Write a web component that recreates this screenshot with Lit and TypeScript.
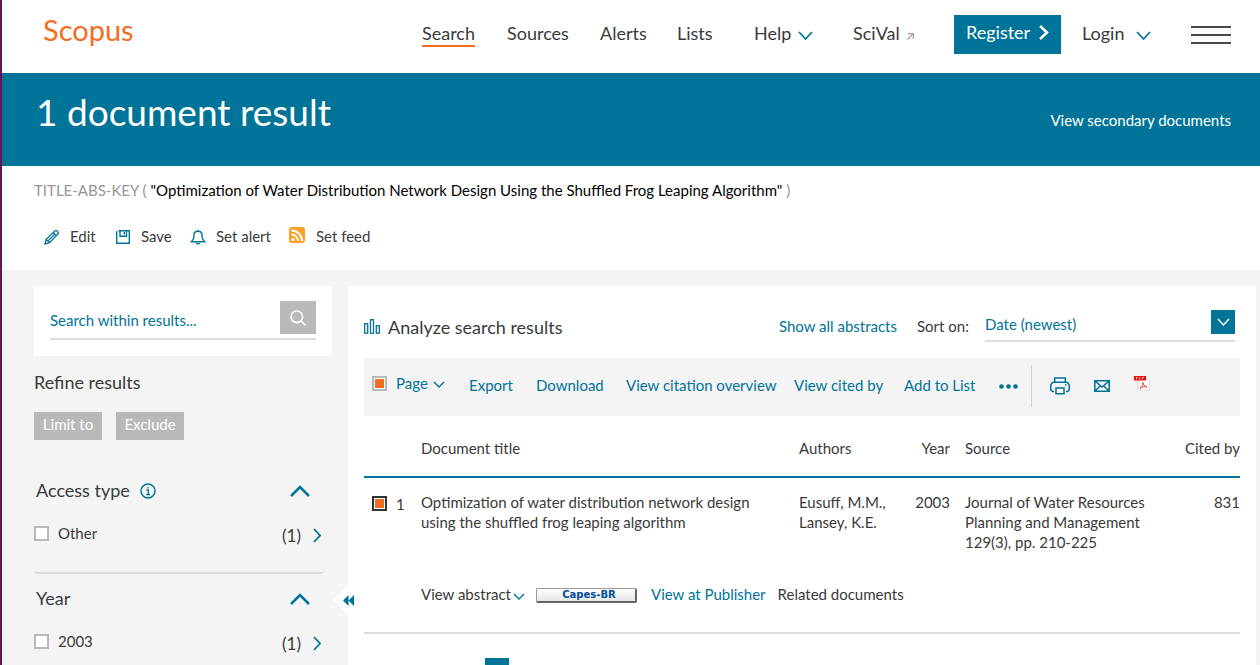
import { LitElement, html, css, svg } from "lit";
import { customElement, state } from "lit/decorators.js";

const chevron = (dir: "down" | "up" | "right", w: number, h: number, stroke = 1.7) => {
  const points = {
    down: `1,1 ${w / 2},${h - 2} ${w - 1},1`,
    up: `1,${h - 1} ${w / 2},2 ${w - 1},${h - 1}`,
    right: `1,1 ${w - 2},${h / 2} 1,${h - 1}`,
  }[dir];
  return html`<svg class="chev" width=${w} height=${h} viewBox="0 0 ${w} ${h}" aria-hidden="true">
    ${svg`<polyline points=${points} fill="none" stroke="currentColor" stroke-width=${stroke} />`}
  </svg>`;
};

const base = css`
  * { box-sizing: border-box; }
  a { color: inherit; text-decoration: none; }
  button, input, select { font: inherit; color: inherit; border: 0; border-radius: 0; margin: 0; padding: 0; background: none; }
  button { cursor: pointer; text-align: left; }
  svg { display: block; flex: none; }
  .check {
    appearance: none; width: 15px; height: 15px; flex: none;
    border: 2px solid #b9b9b9; background: #fff; display: block;
  }
  .check:checked { background: #f36d21; box-shadow: inset 0 0 0 1px #fff; }
`;

@customElement("site-header")
export class SiteHeader extends LitElement {
  static styles = [base, css`
    :host { display: block; background: #fff; color: #3a3a3a; }
    .bar { display: flex; justify-content: space-between; height: 73px; padding: 0 29px 0 41px; }
    .brand { color: #f36d21; font-size: 29px; line-height: 36px; padding-top: 12px; }
    .nav { display: grid; grid-template-columns: 85px 93px 77px 77px 99px 101px 128px 109px 40px;
      align-items: start; padding-top: 15px; font-size: 18px; line-height: 24px; }
    .item { display: inline-flex; align-items: center; justify-self: start; gap: 7px; margin-top: 6px; height: 24px; }
    .current { height: 26px; border-bottom: 2px solid #f36d21; }
    .item .chev { color: #007398; margin-top: 6px; }
    .login { gap: 12px; }
    .ext { color: #a0a0a0; margin-top: 6px; }
    .register { background: #007398; color: #fff; width: 107px; height: 39px; display: flex; align-items: center;
      gap: 9px; padding: 0 10px 5px 12px; }
    .burger { width: 40px; height: 18px; margin-top: 11px; border-top: 2px solid #4a4a4a; border-bottom: 2px solid #4a4a4a;
      display: flex; align-items: center; }
    .burger span { width: 100%; height: 2px; background: #4a4a4a; }
  `];
  render() {
    return html`<header class="bar">
      <a class="brand" href="#">Scopus</a>
      <nav class="nav">
        <a class="item current" href="#">Search</a>
        <a class="item" href="#">Sources</a>
        <a class="item" href="#">Alerts</a>
        <a class="item" href="#">Lists</a>
        <button class="item">Help ${chevron("down", 15, 10)}</button>
        <a class="item" href="#">SciVal
          <svg class="ext" width="7" height="7" viewBox="0 0 7 7"><path d="M1 .7H6.3V6M6.3.7L.5 6.5" fill="none" stroke="currentColor" stroke-width="1.2"/></svg></a>
        <a class="register" href="#">Register ${chevron("right", 10, 15, 2.5)}</a>
        <button class="item login">Login ${chevron("down", 15, 10)}</button>
        <button class="burger" aria-label="Menu"><span></span></button>
      </nav>
    </header>`;
  }
}

@customElement("query-bar")
export class QueryBar extends LitElement {
  static styles = [base, css`
    :host { display: block; background: #fff; color: #3a3a3a; }
    .banner { background: #007398; color: #fff; display: flex; justify-content: space-between; align-items: flex-start;
      height: 93px; padding: 0 29px 0 34px; }
    .title { margin: 0; font-size: 37px; font-weight: 400; line-height: 48px; padding-top: 15px; }
    .secondary { line-height: 20px; padding-top: 37px; }
    .query { margin: 0; padding: 14px 32px 0; line-height: 20px; color: #000; }
    .op { color: #969696; }
    .actions { display: grid; grid-template-columns: 71px 75px 98px auto; justify-content: start;
      padding: 25px 0 23px 42px; line-height: 22px; }
    .action { display: flex; gap: 10px; }
    .action svg { color: #007398; width: 16px; height: 20px; padding-top: 4px; }
    .action .feed { width: 18px; height: 20px; padding: 2px 0 0; }
  `];
  render() {
    return html`
      <div class="banner">
        <h1 class="title">1 document result</h1>
        <a class="secondary" href="#">View secondary documents</a>
      </div>
      <p class="query"><span class="op">TITLE-ABS-KEY (</span> "Optimization of Water Distribution Network Design Using the Shuffled Frog Leaping Algorithm" <span class="op">)</span></p>
      <div class="actions">
        <button class="action"><svg viewBox="0 0 16 16" fill="none" stroke="currentColor" stroke-width="1.3"><path d="M1 15l1.200-4.600L10.600 2.200c1-1 2.100-.6 2.900.2s1.200 1.900.2 2.900L5.500 13.700zM2.200 10.400l3.300 3.300M9.300 3.500l3.200 3.200M4 11.900l6.800-6.700"/></svg>Edit</button>
        <button class="action"><svg viewBox="0 0 16 16" fill="none" stroke="currentColor" stroke-width="1.4"><path d="M1.700 2.200V14.300H14.300V1.700H3.500M5 1.700V7.300H11.500V1.700M9.300 3V5.500"/></svg>Save</button>
        <button class="action"><svg viewBox="0 0 16 16" fill="none" stroke="currentColor" stroke-width="1.400"><path d="M1.500 12.700C3 11 4 9.500 4 7V5.500C4 3.500 5.500 2.200 8 2.200s4 1.300 4 3.300V7c0 2.500 1 4 2.500 5.700zM6.300 14c.5 1.200 2.900 1.200 3.400 0M8 .8v1.400"/></svg>Set alert</button>
        <button class="action"><svg class="feed" viewBox="0 0 18 18"><rect x="1" y="0" width="16" height="16" rx="3" fill="#ff9f26"/><circle cx="5" cy="12.500" r="1.600" fill="#fff"/><path d="M3.500 7.500a6.500 6.500 0 0 1 6.500 6.500M3.500 3.500A10.500 10.500 0 0 1 14 14" fill="none" stroke="#fff" stroke-width="2"/></svg>Set feed</button>
      </div>`;
  }
}

@customElement("refine-panel")
export class RefinePanel extends LitElement {
  static styles = [base, css`
    :host { display: block; color: #3a3a3a; }
    .card { background: #fff; height: 70px; padding: 15px 16px 0; }
    .search { display: flex; height: 39px; border-bottom: 2px solid #dcdcdc; }
    .field { flex: 1; min-width: 0; height: 38px; }
    .field::placeholder { color: #007398; opacity: 1; }
    .go { width: 36px; height: 33px; background: #b9b9b9; color: #fff; display: grid; place-items: center; }
    .heading { margin: 0; font-size: 18px; font-weight: 400; line-height: 24px; }
    .refine { padding-top: 14px; }
    .buttons { display: flex; gap: 14px; padding-top: 18px; }
    .btn { background: #b9b9b9; color: #fff; height: 28px; padding: 0 8px 4px; min-width: 68px; text-align: center; }
    .group { margin-right: 8px; height: 108px; border-bottom: 2px solid #dcdcdc; border-radius: 4px; padding: 12px 0 0; }
    .groups { padding-top: 26px; }
    .head { display: flex; align-items: center; width: 100%; padding: 0 14px 0 2px; gap: 10px; }
    .head .chev { margin-left: auto; }
    .head svg { margin-top: 2px; }
    .head svg, .row svg { color: #007398; }
    .row { display: flex; align-items: center; height: 24px; margin-top: 19px; padding-right: 2px; }
    .label { padding-left: 9px; flex: 1; }
    .count { display: flex; align-items: center; gap: 12px; font-size: 17px; padding-top: 5px; }
  `];
  private groups = [
    { name: "Access type", info: true, id: "access", value: "Other" },
    { name: "Year", info: false, id: "year", value: "2003" },
  ];
  render() {
    return html`
      <div class="card"><form class="search">
        <input class="field" type="text" aria-label="Search within results" placeholder="Search within results...">
        <button class="go" type="button" aria-label="Search"><svg width="16" height="16" viewBox="0 0 16 16" fill="none" stroke="currentColor" stroke-width="1.600"><circle cx="6.800" cy="6.800" r="5.800"/><path d="M11 11l4.500 4.500"/></svg></button>
      </form></div>
      <h2 class="heading refine">Refine results</h2>
      <div class="buttons"><button class="btn">Limit to</button><button class="btn">Exclude</button></div>
      <div class="groups">
      ${this.groups.map((g) => html`<section class="group">
        <h3 class="heading"><button class="head">${g.name}
          ${g.info ? html`<svg width="16" height="16" viewBox="0 0 16 16" fill="none" stroke="currentColor" stroke-width="1.500"><circle cx="8" cy="8" r="7"/><path d="M6.500 7H8.300V11.500M6.300 11.500H10M8 4V5.600" stroke-width="1.300"/></svg>` : ""}
          ${chevron("up", 20, 12, 2.5)}</button></h3>
        <div class="row"><input class="check" type="checkbox" id=${g.id}><label class="label" for=${g.id}>${g.value}</label>
          <a class="count" href="#">(1) ${chevron("right", 9, 15, 1.8)}</a></div>
      </section>`)}
      </div>`;
  }
}

@customElement("result-list")
export class ResultList extends LitElement {
  @state() private all = true;
  static styles = [base, css`
    :host { display: block; background: #fff; color: #3a3a3a; position: relative; padding: 0 16px; }
    .collapse { position: absolute; left: -15px; top: 299px; width: 24px; height: 30px; }
    .top { display: flex; align-items: flex-start; height: 72px; padding-right: 5px; line-height: 20px; }
    .analyze { display: flex; gap: 8px; font-size: 18px; line-height: 24px; padding-top: 29px; margin-right: auto; }
    .analyze svg { color: #007398; margin-top: 4px; }
    .link { color: #007398; }
    .show { padding-top: 30px; margin-right: 20px; }
    .sortlabel { padding-top: 30px; width: 68px; white-space: nowrap; }
    .sort { display: grid; width: 250px; height: 32px; margin-top: 24px; border-bottom: 2px solid #dcdcdc; color: #007398; }
    .sort select { grid-area: 1 / 1; appearance: none; width: 100%; height: 28px; }
    .arrow { grid-area: 1 / 1; justify-self: end; width: 24px; height: 24px; background: #007398; color: #fff;
      display: grid; place-items: center; pointer-events: none; }
    .tools { display: grid; grid-template-columns: 97px 67px 90px 168px 110px 95px 32px 19px 44px 40px 20px;
      align-items: center; height: 58px; padding: 0 0 2px 8px; background: #f4f4f4; color: #007398; }
    .tools > a { padding-bottom: 2px; }
    .page { display: flex; align-items: center; gap: 9px; padding-bottom: 5px; }
    .page button { display: flex; align-items: center; gap: 5px; padding-bottom: 2px; }
    .page .chev { margin-top: 4px; }
    .rule { width: 1px; height: 42px; background: #cfcfcf; }
    .grid { width: 100%; table-layout: fixed; border-collapse: collapse; line-height: 20px; }
    .grid th { font-weight: 400; text-align: left; height: 61px; padding: 3px 0 0; border-bottom: 2px solid #007398; }
    .grid td { vertical-align: top; padding: 14px 0 0; }
    .grid .num { text-align: right; }
    .grid .src { padding-left: 15px; }
    .c0 { width: 57px; } .c2 { width: 109px; } .c3 { width: 42px; } .c4 { width: 200px; } .c5 { width: 90px; }
    .pick { display: flex; gap: 9px; padding: 2px 0 0 8px; }
    .pick .check { border-color: #323232; margin-top: 2px; }
    .grid tbody { border-bottom: 2px solid #dcdcdc; }
    .grid .cell { padding: 0; }
    .more { display: flex; align-items: center; height: 80px; padding: 4px 0 0; }
    .abstract { display: flex; align-items: center; gap: 2px; width: 115px; white-space: nowrap; }
    .abstract .chev { color: #007398; margin-top: 5px; }
    .capes { width: 101px; height: 15px; margin-top: 3px; border: 1px solid #9a9a9a; border-right: 2px solid #666; border-bottom: 2px solid #666;
      border-radius: 2px; background: linear-gradient(#fff, #e6e6e6); color: #004e9e; padding-left: 6px;
      font: bold 10px/12px "DejaVu Sans", sans-serif; text-align: center; }
    .publisher { padding: 0 12px 0 14px; color: #007398; }
    .pages { padding: 24px 0 0 121px; display: flex; }
    .current { background: #007398; width: 24px; height: 26px; }
  `];
  render() {
    return html`
      <button class="collapse" aria-label="Collapse panel"><svg width="24" height="30" viewBox="0 0 24 30"><path d="M15 0L0 15L15 30H24V0z" fill="#fff"/><path d="M10 15.500l5.500-5.500v11zM15.500 15.500L21 10v11z" fill="#007398"/></svg></button>
      <div class="top">
        <a class="analyze" href="#"><svg width="16" height="15" viewBox="0 0 16 15" fill="none" stroke="currentColor" stroke-width="1.300"><rect x=".7" y="4.700" width="3" height="9.500"/><rect x="6.500" y=".7" width="3" height="13.500"/><rect x="12.300" y="6.700" width="3" height="7.500"/></svg>Analyze search results</a>
        <a class="link show" href="#">Show all abstracts</a>
        <label class="sortlabel" for="sort">Sort on:</label>
        <div class="sort"><select id="sort"><option>Date (newest)</option></select><span class="arrow">${chevron("down", 13, 9, 1.5)}</span></div>
      </div>
      <div class="tools">
        <div class="page"><input class="check" type="checkbox" aria-label="Select page" .checked=${this.all}
          @change=${(e: Event) => (this.all = (e.target as HTMLInputElement).checked)}><button>Page ${chevron("down", 12, 8, 1.4)}</button></div>
        <a href="#">Export</a><a href="#">Download</a><a href="#">View citation overview</a><a href="#">View cited by</a><a href="#">Add to List</a>
        <button aria-label="More"><svg width="19" height="5" viewBox="0 0 19 5" fill="currentColor"><circle cx="2.500" cy="2.500" r="2.300"/><circle cx="9.500" cy="2.500" r="2.300"/><circle cx="16.500" cy="2.500" r="2.300"/></svg></button>
        <span class="rule"></span>
        <button aria-label="Print"><svg width="20" height="18" viewBox="0 0 20 18" fill="none" stroke="currentColor" stroke-width="1.500"><path d="M4.700 5V1H15.300V5M4 14.500H2.500L.8 13V7.500L3 5.300H17L19.200 7.500V13L17.500 14.500H16M6 11H14V16.800H6z"/><path d="M15 8h1.500"/></svg></button>
        <button aria-label="Email"><svg width="16" height="12" viewBox="0 0 16 12" fill="none" stroke="currentColor" stroke-width="1.500"><path d="M.8.8H15.200V11.200H.8zM1 1l7 6 7-6M1 11l5.200-5M15 11L9.800 6"/></svg></button>
        <button aria-label="PDF"><svg width="16" height="22" viewBox="0 0 16 22"><path d="M4 2H12L15.500 5.500V15H4z" fill="#fff" stroke="#d4d4d4" stroke-width=".8"/><rect x="0" y="1" width="12" height="4.500" fill="#f20a0a"/><path d="M2.500 4.500V2.500H3.800M5.500 2.300V4.300H6.500M8.500 4.500V2.500H10" stroke="#fff" stroke-width=".7" fill="none"/><path d="M6 13.500C8 12 9 10 9 7.500C9.500 10 10.500 11.500 13 12C10.500 11.200 8 11.700 6 13.500z" fill="none" stroke="#f03030" stroke-width=".9"/></svg></button>
      </div>
      <table class="grid">
        <colgroup><col class="c0"><col><col class="c2"><col class="c3"><col class="c4"><col class="c5"></colgroup>
        <thead><tr><th></th><th>Document title</th><th>Authors</th><th class="num">Year</th><th class="src">Source</th><th class="num">Cited by</th></tr></thead>
        <tbody>
          <tr>
            <td><label class="pick"><input class="check" type="checkbox" checked>1</label></td>
            <td><a href="#">Optimization of water distribution network design<br>using the shuffled frog leaping algorithm</a></td>
            <td><a href="#">Eusuff, M.M.,</a><br><a href="#">Lansey, K.E.</a></td>
            <td class="num">2003</td>
            <td class="src"><a href="#">Journal of Water Resources Planning and Management</a><br>129(3), pp. 210-225</td>
            <td class="num"><a href="#">831</a></td>
          </tr>
          <tr><td class="cell"></td><td colspan="5" class="cell">
            <div class="more"><button class="abstract">View abstract ${chevron("down", 12, 8, 1.4)}</button>
              <a class="capes" href="#">Capes-BR</a><a class="publisher" href="#">View at Publisher</a><a href="#">Related documents</a></div>
          </td></tr>
        </tbody>
      </table>
      <nav class="pages"><button class="current" aria-label="Page 1"></button></nav>`;
  }
}

@customElement("app-root")
export class AppRoot extends LitElement {
  static styles = css`
    :host { display: block; height: 100vh; overflow: hidden; background: #f4f4f4; border-left: 2px solid #64145a;
      box-sizing: border-box; font: 15px/20px Lato, "Open Sans", sans-serif; }
    .body { display: grid; grid-template-columns: 298px minmax(0, 1fr); gap: 16px; padding: 16px 4px 0 32px; min-height: 100%; }
  `;
  render() {
    return html`<site-header></site-header><query-bar></query-bar>
      <main class="body"><refine-panel></refine-panel><result-list></result-list></main>`;
  }
}
